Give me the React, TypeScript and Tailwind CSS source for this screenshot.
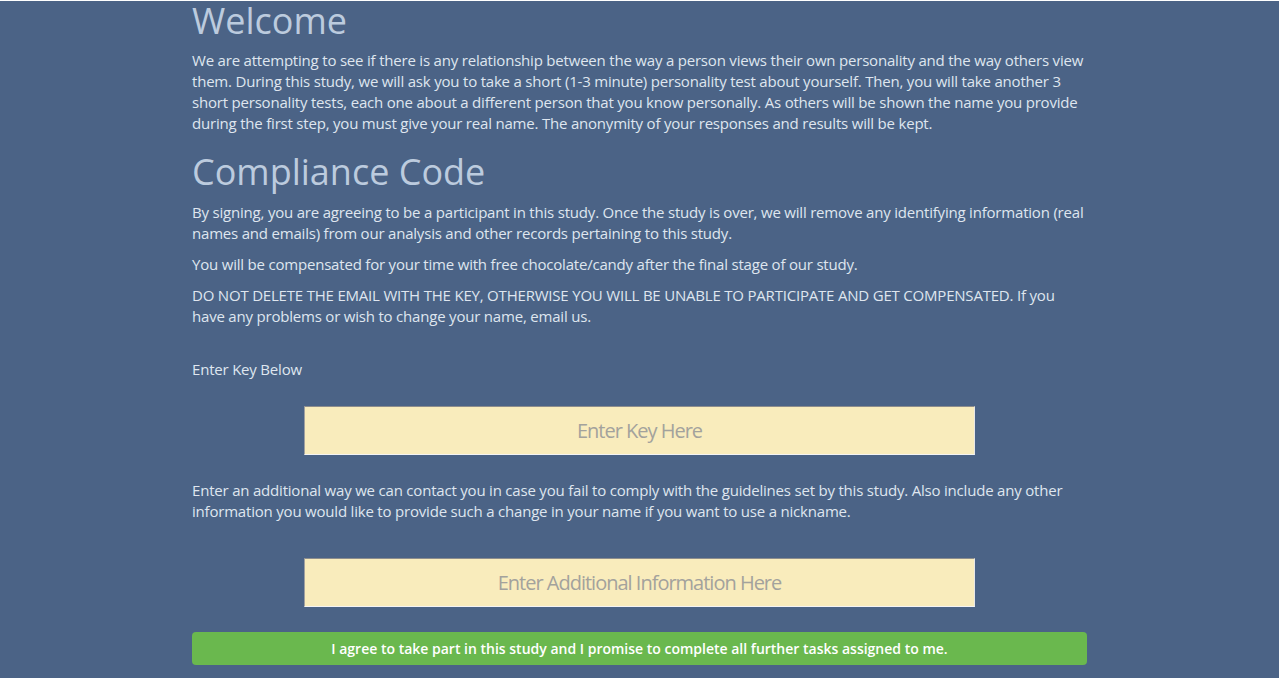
import React from "react";

export default function App() {
  const p = "text-[15px] leading-[21px] tracking-[-0.2px]";
  return (
    <div
      className="min-h-[678px] w-full bg-[#4b6386] text-[#dfe6ef]"
      style={{ fontFamily: '"Open Sans", "Noto Sans", sans-serif' }}
    >
      <div className="mx-auto w-[895px]">
        <h1 className="mt-[1px] mb-[9px] text-[36px] leading-[39.6px] font-normal text-[#bccbde]">
          Welcome
        </h1>
        <p className={`mb-[10px] ${p}`}>
          We are attempting to see if there is any relationship between the way a person views their own personality and the way others view them. During this study, we will ask you to take a short (1-3 minute) personality test about yourself. Then, you will take another 3 short personality tests, each one about a different person that you know personally. As others will be shown the name you provide during the first step, you must give your real name. The anonymity of your responses and results will be kept.
        </p>
        <h1 className="mt-[18px] mb-[11px] text-[36px] leading-[39.6px] font-normal text-[#bccbde]">
          Compliance Code
        </h1>
        <p className={`mb-[10px] ${p}`}>
          By signing, you are agreeing to be a participant in this study. Once the study is over, we will remove any identifying information (real names and emails) from our analysis and other records pertaining to this study.
        </p>
        <p className={`mb-[10px] ${p}`}>
          You will be compensated for your time with free chocolate/candy after the final stage of our study.
        </p>
        <p className={`mb-[10px] ${p}`}>
          DO NOT DELETE THE EMAIL WITH THE KEY, OTHERWISE YOU WILL BE UNABLE TO PARTICIPATE AND GET COMPENSATED. If you have any problems or wish to change your name, email us.
        </p>
        <p className={`mt-[32px] ${p}`}>Enter Key Below</p>
        <div className="mt-[26px] flex justify-center">
          <input
            type="text"
            placeholder="Enter Key Here"
            className="h-[49px] w-[671px] border border-t-[#8d8d8d] border-l-[#a0a0a0] border-r-[#e8e8e8] border-b-[#f4f4f4] bg-[#f9ecbc] text-center text-[20px] tracking-[-1px] text-[#777] placeholder:text-[#a3a29c] outline-none"
            style={{ fontFamily: '"Open Sans", sans-serif' }}
          />
        </div>
        <p className={`mt-[25px] ${p}`}>
          Enter an additional way we can contact you in case you fail to comply with the guidelines set by this study. Also include any other information you would like to provide such a change in your name if you want to use a nickname.
        </p>
        <div className="mt-[36px] flex justify-center">
          <input
            type="text"
            placeholder="Enter Additional Information Here"
            className="h-[49px] w-[671px] border border-t-[#8d8d8d] border-l-[#a0a0a0] border-r-[#e8e8e8] border-b-[#f4f4f4] bg-[#f9ecbc] text-center text-[20px] tracking-[-1px] text-[#777] placeholder:text-[#a3a29c] outline-none"
            style={{ fontFamily: '"Open Sans", sans-serif' }}
          />
        </div>
        <button
          type="button"
          className="mt-[25px] h-[33px] w-full rounded-[4px] bg-[#6ab84e] text-[14px] font-semibold tracking-[0px] text-white"
          style={{ fontFamily: '"Open Sans", sans-serif' }}
        >
          I agree to take part in this study and I promise to complete all further tasks assigned to me.
        </button>
      </div>
    </div>
  );
}
